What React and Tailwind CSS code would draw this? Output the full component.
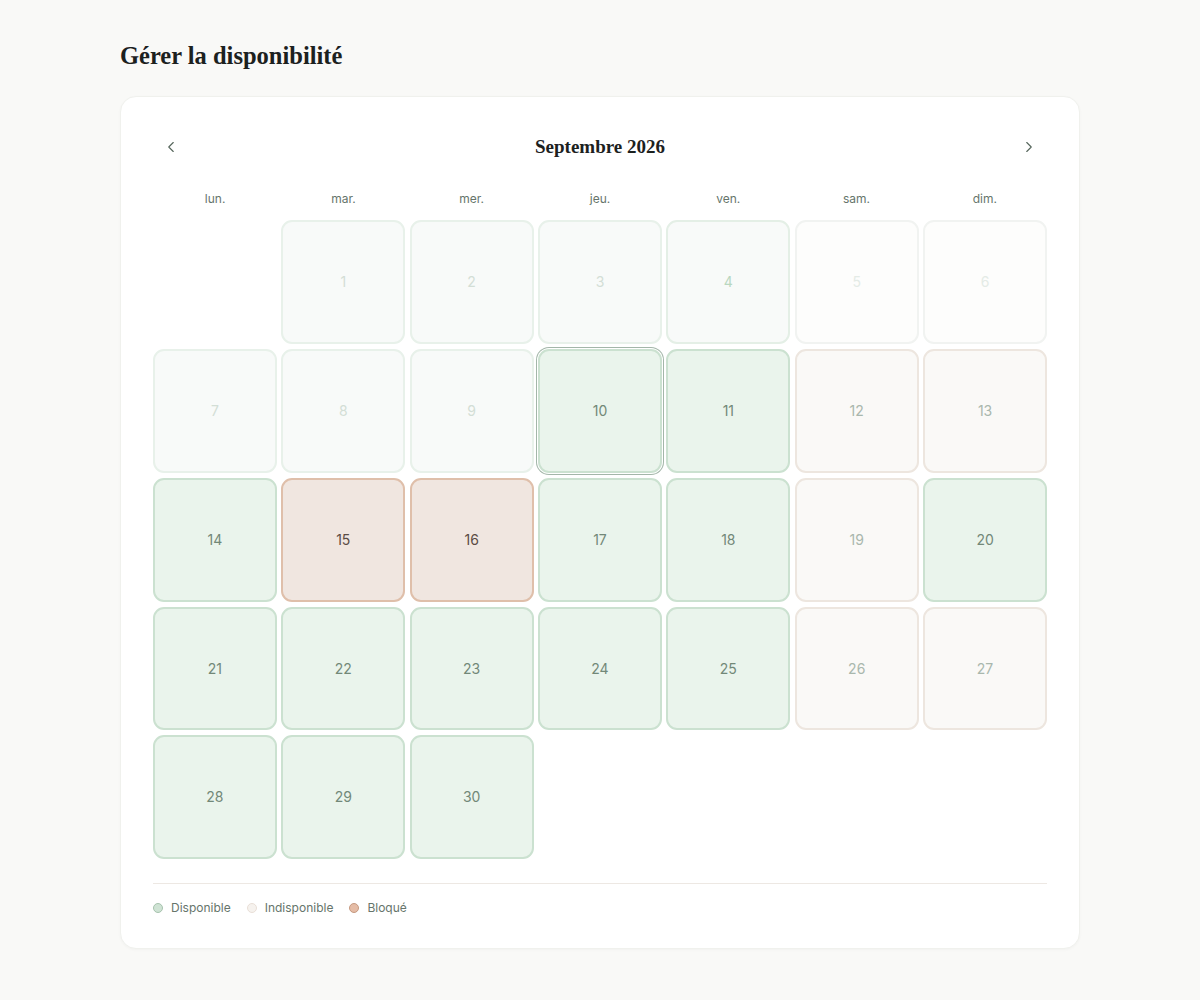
import React from "react";
import { ChevronLeft, ChevronRight } from "lucide-react";

const weekDays = ["lun.", "mar.", "mer.", "jeu.", "ven.", "sam.", "dim."];

// status per day of September 2026
const statusOf = (d) => {
  if (d <= 3 || (d >= 7 && d <= 9)) return "past";
  if (d === 4) return "pastAvail";
  if (d === 5 || d === 6) return "pastOff";
  if (d === 15 || d === 16) return "blocked";
  if ([12, 13, 19, 26, 27].includes(d)) return "off";
  return "avail";
};

const styles = {
  past: "bg-[#f8faf9] border-[#e8f1ea] text-[#d3ded6]",
  pastAvail: "bg-[#f8faf9] border-[#e4efe6] text-[#b9d7c0]",
  pastOff: "bg-[#fdfdfc] border-[#f1f3f1] text-[#e4ebe6]",
  off: "bg-[#faf9f7] border-[#ede6df] text-[#a9b7ad]",
  avail: "bg-[#eaf4ec] border-[#cbe1d0] text-[#728878]",
  blocked: "bg-[#f0e6e0] border-[#dfbfaa] text-[#5b4c44]",
};

const DayCell = ({ day }) => {
  const status = statusOf(day);
  const today = day === 10;
  return (
    <button
      className={`aspect-square rounded-[11px] border-2 flex items-center justify-center text-sm ${styles[status]} ${
        today ? "ring-1 ring-[#a3b6a9] ring-offset-1" : ""
      }`}
    >
      {day}
    </button>
  );
};

const LegendDot = ({ className, label }) => (
  <div className="flex items-center gap-2">
    <span className={`w-[10px] h-[10px] rounded-full border ${className}`} />
    <span>{label}</span>
  </div>
);

export default function App() {
  const days = Array.from({ length: 30 }, (_, i) => i + 1);
  return (
    <div
      className="min-h-screen bg-[#f9f9f7] px-[120px] pt-[40px] pb-[52px]"
      style={{ fontFamily: "Inter, 'Noto Sans', sans-serif" }}
    >
      <h1
        className="text-[24.5px] leading-8 font-bold text-[#1c211e] mb-[24px]"
        style={{ fontFamily: "'Liberation Serif', serif" }}
      >
        Gérer la disponibilité
      </h1>

      <div className="bg-white rounded-2xl border border-[#f0f1ed] shadow-[0_1px_3px_rgba(0,0,0,0.03)] px-8 pt-8 pb-8">
        {/* Month header */}
        <div className="flex items-center justify-between h-9 mb-6">
          <button className="w-9 h-9 flex items-center justify-center text-[#56665c]">
            <ChevronLeft className="w-[18px] h-[18px]" strokeWidth={1.5} />
          </button>
          <h2
            className="text-[19px] font-bold text-[#1c211e]"
            style={{ fontFamily: "'Liberation Serif', serif" }}
          >
            Septembre 2026
          </h2>
          <button className="w-9 h-9 flex items-center justify-center text-[#56665c]">
            <ChevronRight className="w-[18px] h-[18px]" strokeWidth={1.5} />
          </button>
        </div>

        {/* Weekdays */}
        <div className="grid grid-cols-7 gap-1 mb-[11px]">
          {weekDays.map((w) => (
            <div key={w} className="h-5 flex items-center justify-center text-xs text-[#66756b]">
              {w}
            </div>
          ))}
        </div>

        {/* Days */}
        <div className="grid grid-cols-7 gap-x-[4.5px] gap-y-[5px]">
          <div />
          {days.map((d) => (
            <DayCell key={d} day={d} />
          ))}
        </div>

        {/* Legend */}
        <div className="mt-6 pt-4 border-t border-[#ede8e3] flex items-center gap-4 text-xs text-[#66756b]">
          <LegendDot className="bg-[#cfe3d4] border-[#a7c3ae]" label="Disponible" />
          <LegendDot className="bg-[#f6f2ee] border-[#e9dfd7]" label="Indisponible" />
          <LegendDot className="bg-[#e5bca6] border-[#c69a81]" label="Bloqué" />
        </div>
      </div>
    </div>
  );
}
